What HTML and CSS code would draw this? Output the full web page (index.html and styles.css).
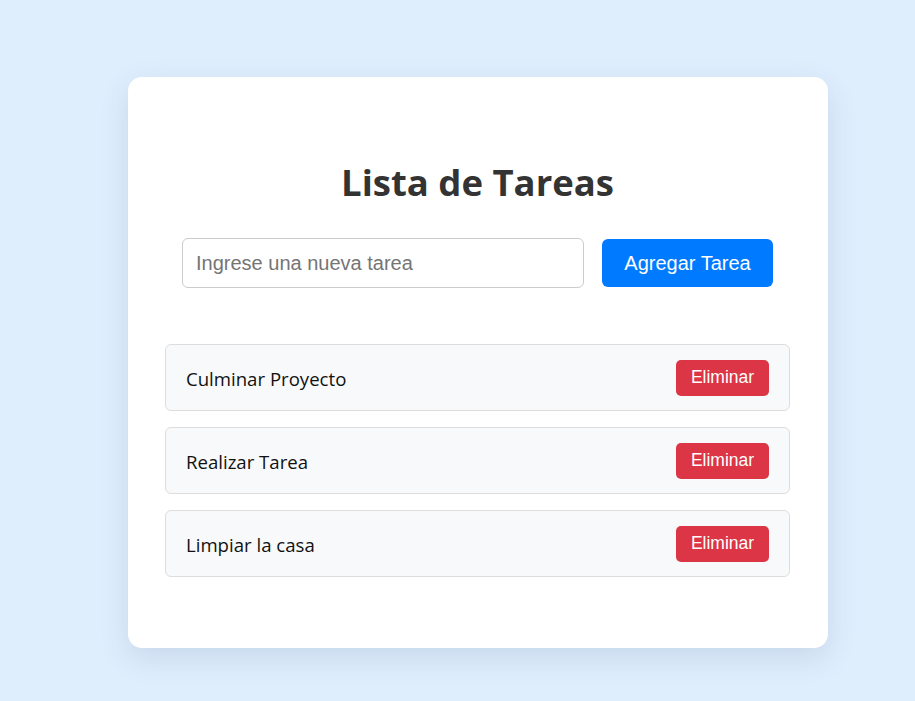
FILE: index.html
```html
<!DOCTYPE html>
<html lang="es">
<head>
<meta charset="utf-8">
<title>Lista de Tareas</title>
<link rel="stylesheet" href="styles.css">
</head>
<body>
  <main class="card">
    <h1 class="title">Lista de Tareas</h1>
    <div class="add-row">
      <input class="task-input" type="text" placeholder="Ingrese una nueva tarea">
      <button class="add-btn" type="button">Agregar Tarea</button>
    </div>
    <ul class="task-list">
      <li class="task"><span class="task-text">Culminar Proyecto</span><button class="del-btn" type="button">Eliminar</button></li>
      <li class="task"><span class="task-text">Realizar Tarea</span><button class="del-btn" type="button">Eliminar</button></li>
      <li class="task"><span class="task-text">Limpiar la casa</span><button class="del-btn" type="button">Eliminar</button></li>
    </ul>
  </main>
</body>
</html>
```
FILE: styles.css
```css
html, body {
  margin: 0;
  padding: 0;
}
body {
  background: #dfeefd;
  font-family: "Open Sans", "Noto Sans", sans-serif;
  min-height: 701px;
  box-sizing: border-box;
  padding: 77px 0 0 128px;
}
.card {
  width: 700px;
  box-sizing: border-box;
  background: #ffffff;
  border-radius: 14px;
  box-shadow: 0 10px 30px rgba(30, 60, 110, 0.12);
  padding: 81px 38px 71px 37px;
}
.title {
  margin: 0;
  text-align: center;
  font-size: 36.5px;
  line-height: 48px;
  font-weight: 700;
  color: #333333;
}
.add-row {
  display: flex;
  justify-content: center;
  align-items: center;
  gap: 18px;
  margin-top: 32px;
}
.task-input {
  width: 402px;
  height: 50px;
  box-sizing: border-box;
  border: 1px solid #cccccc;
  border-radius: 6px;
  padding: 0 13px;
  font-family: "Liberation Sans", Arial, sans-serif;
  font-size: 20px;
  color: #333;
  outline: none;
}
.task-input::placeholder {
  color: #757575;
}
.add-btn {
  width: 171px;
  height: 48px;
  border: none;
  border-radius: 6px;
  background: #007bff;
  color: #ffffff;
  font-family: "Liberation Sans", Arial, sans-serif;
  font-size: 20px;
  padding: 0;
}
.task-list {
  list-style: none;
  margin: 56px 0 0 0;
  padding: 0;
  display: flex;
  flex-direction: column;
  gap: 16px;
}
.task {
  height: 67px;
  box-sizing: border-box;
  display: flex;
  align-items: center;
  justify-content: space-between;
  padding: 0 20px;
  background: #f8f9fa;
  border: 1px solid #dddddd;
  border-radius: 6px;
}
.task-text {
  font-size: 18.6px;
  color: #111111;
  padding-top: 2px;
}
.del-btn {
  width: 93px;
  height: 36px;
  border: none;
  border-radius: 5px;
  background: #dc3545;
  color: #ffffff;
  font-family: "Liberation Sans", Arial, sans-serif;
  font-size: 17.5px;
  padding: 0;
}
```
